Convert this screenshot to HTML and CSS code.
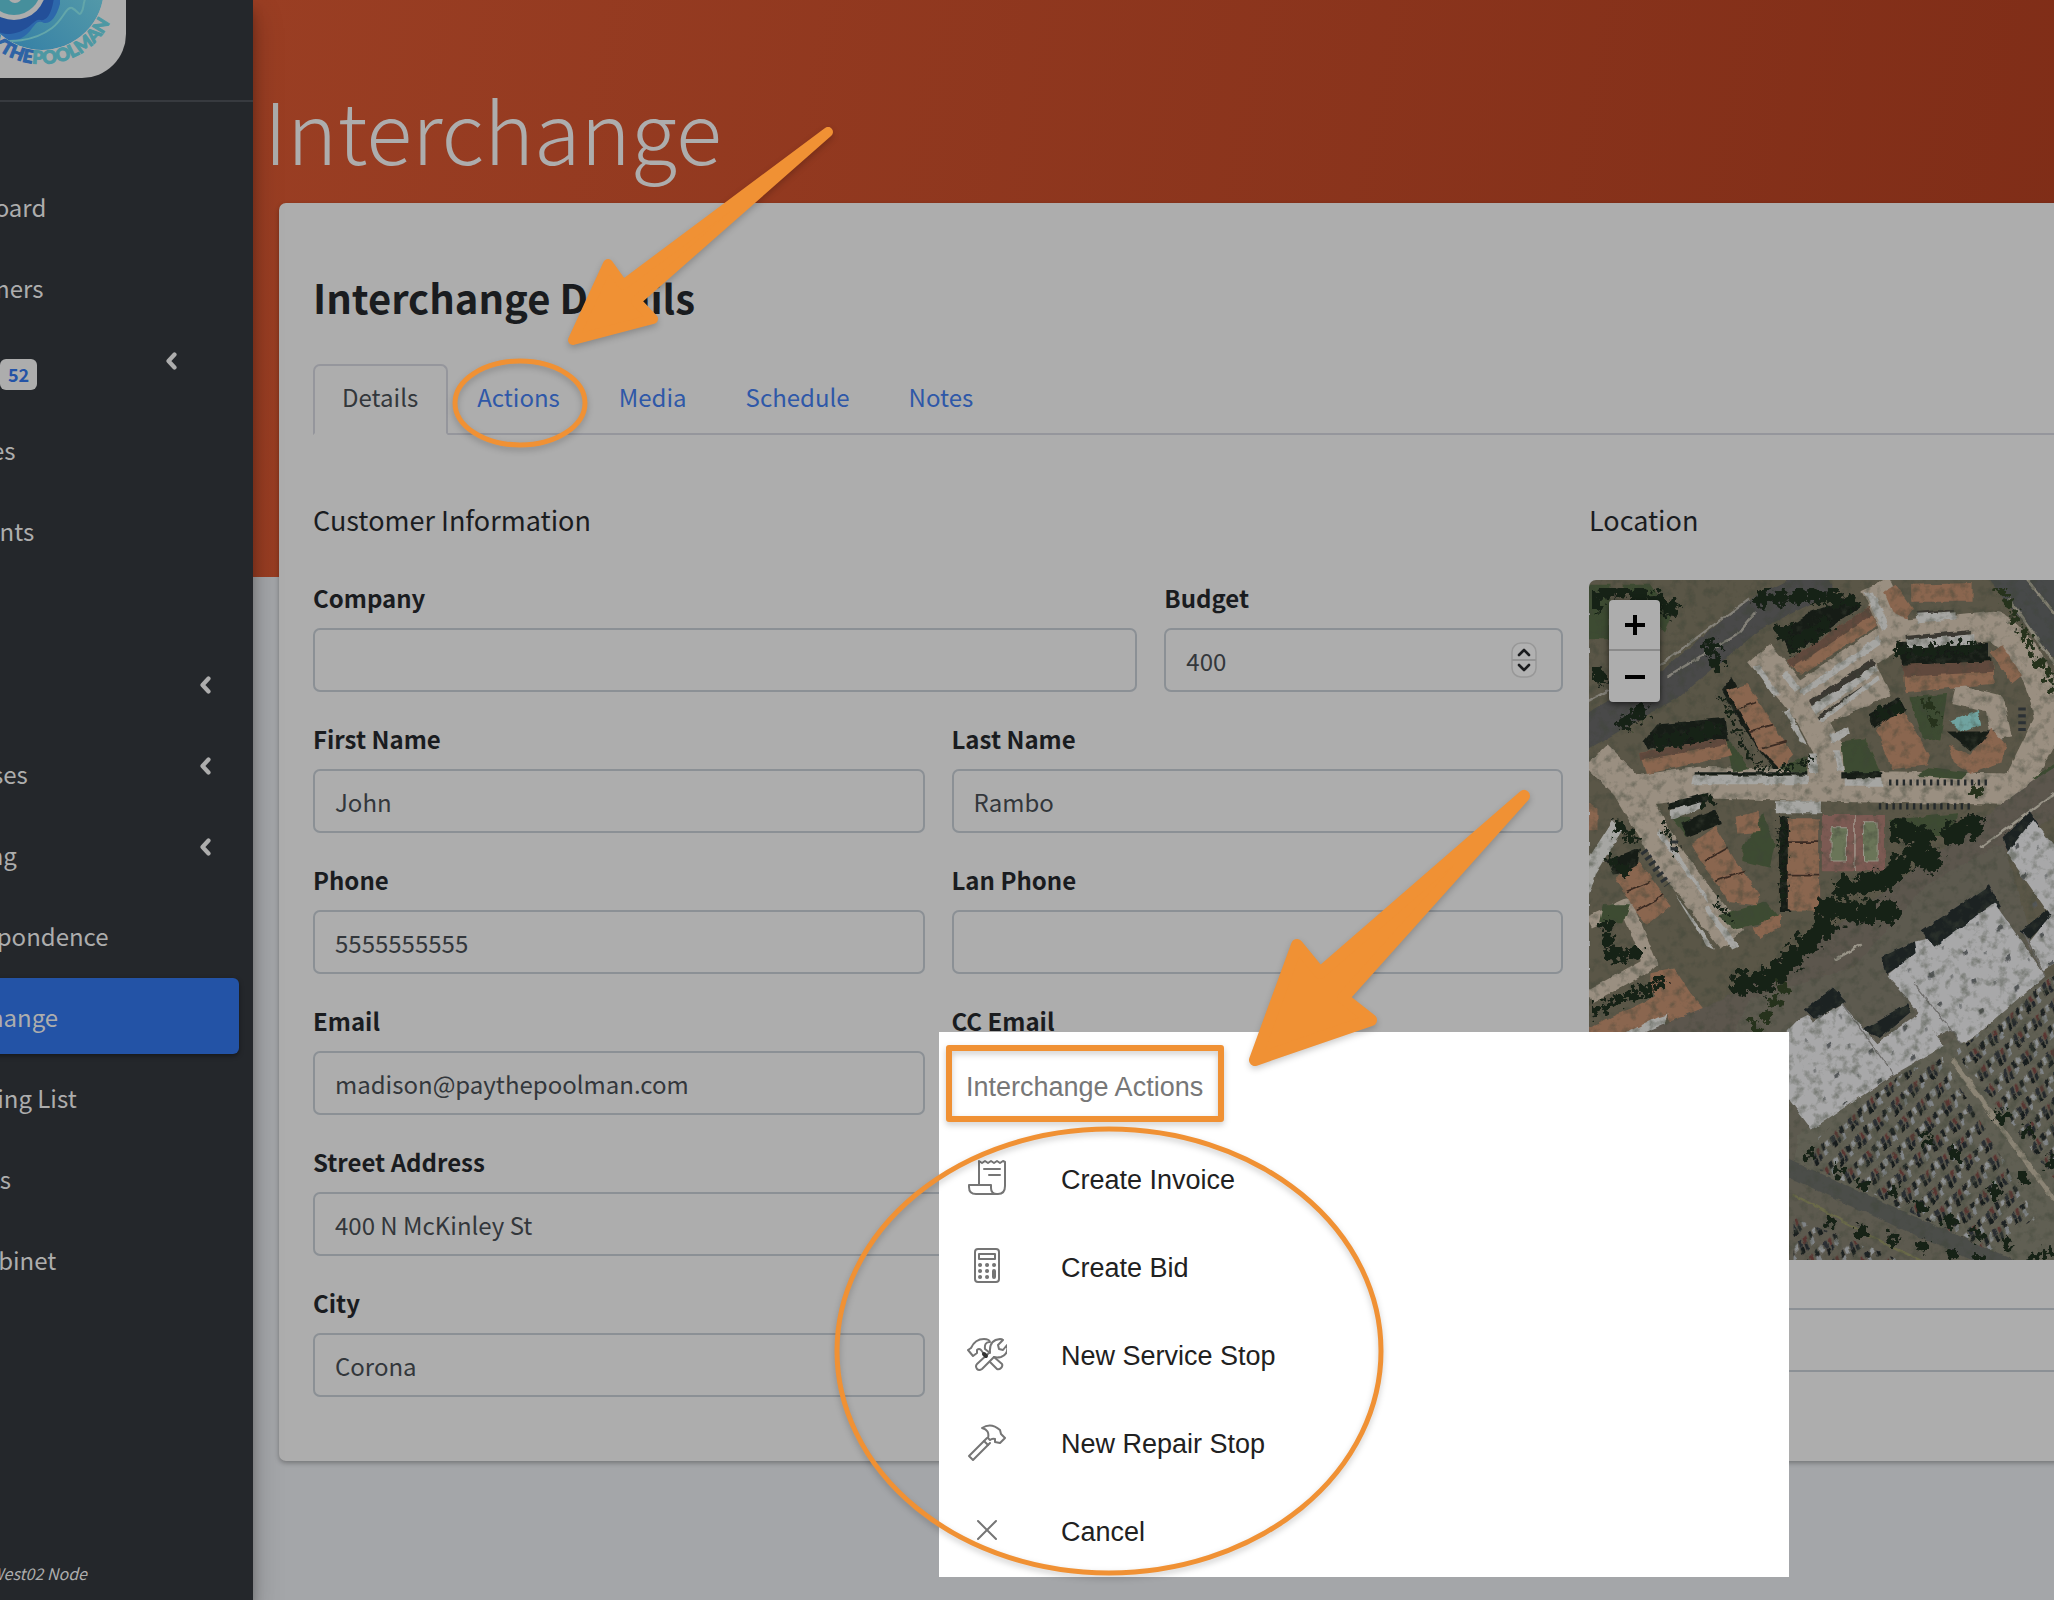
FILE: index.html
```
<!DOCTYPE html>
<html lang="en">
<head>
    <meta charset="UTF-8">
    <meta name="viewport" content="width=device-width, initial-scale=1.0">
    <title>Interchange</title>
    <link rel="stylesheet" href="styles.css">
</head>
<body>

    <!-- shared icons -->
    <svg class="sprite" aria-hidden="true">
        <symbol id="angle" viewBox="0 0 12 18">
            <path d="M9.500 2.500L3.500 9l6 6.500" fill="none" stroke="currentColor" stroke-width="4.200" stroke-linecap="round" stroke-linejoin="round"/>
        </symbol>
    </svg>

    <div class="app">
        <aside class="sidebar">
            <div class="brand">
                <svg class="logo" viewBox="-47 -78 173 156" role="img" aria-label="Pay The Poolman">
                    <defs>
                        <linearGradient id="wave" x1="0" y1="1" x2="1" y2="0">
                            <stop offset="0" stop-color="#2e7aa5"/>
                            <stop offset="1" stop-color="#63a6aa"/>
                        </linearGradient>
                        <clipPath id="disc"><circle cx="42" cy="-12" r="62"/></clipPath>
                        <path id="ring" d="M-34 -12a76 76 0 0 0 152 0"/>
                    </defs>
                    <rect x="-47" y="-78" width="173" height="156" rx="44" fill="#adadad"/>
                    <g clip-path="url(#disc)">
                        <circle cx="42" cy="-12" r="62" fill="url(#wave)"/>
                        <path d="M60 -70V4c-4 14-10 20-16 19c-6-3-8 0-14 8c-8 9-18 12-32 12l-20-50z" fill="#2d68ab"/>
                        <path d="M-20 -60H56C58 6 50 22 40 20c-6-2-10 12-30 14c-12 0-20-6-30-14z" fill="#234f99"/>
                        <path d="M-20 36C10 46 36 40 52 28c12-9 14-22 20-20c6 3 7 8 9 5c4-6 1-8 5-16" fill="none" stroke="#63a6aa" stroke-width="2"/>
                    </g>
                    <circle cx="14" cy="-12" r="32" fill="#adadad"/>
                    <circle cx="14" cy="-12" r="27" fill="#468f9c"/>
                    <circle cx="15" cy="-4" r="7" fill="#adadad"/>
                    <text class="logo-text logo-pay"><textPath href="#ring" startOffset="109">PAYTHE</textPath></text>
                    <text class="logo-text logo-pool"><textPath href="#ring" startOffset="109">POOLMAN</textPath></text>
                </svg>
            </div>

            <nav class="menu">
                <a href="#" class="menu-link">Dashboard</a>
                <a href="#" class="menu-link">Customers</a>
                <a href="#" class="menu-link menu-link-badge"><span class="badge">52</span><svg class="angle"><use href="#angle"/></svg></a>
                <a href="#" class="menu-link">Invoices</a>
                <a href="#" class="menu-link">Payments</a>
                <a href="#" class="menu-link" aria-label="Bids"></a>
                <a href="#" class="menu-link" aria-label="Items"><svg class="angle"><use href="#angle"/></svg></a>
                <a href="#" class="menu-link">Expenses<svg class="angle"><use href="#angle"/></svg></a>
                <a href="#" class="menu-link">Booking<svg class="angle"><use href="#angle"/></svg></a>
                <a href="#" class="menu-link">Correspondence</a>
                <a href="#" class="menu-link active">Interchange</a>
                <a href="#" class="menu-link">Shopping List</a>
                <a href="#" class="menu-link">Reports</a>
                <a href="#" class="menu-link">File Cabinet</a>
            </nav>

            <div class="node">West02 Node</div>
        </aside>

        <main class="main">
            <h1 class="page-title">Interchange</h1>

            <section class="card">
                <h2>Interchange Details</h2>

                <nav class="tabs">
                    <a href="#" class="tab active">Details</a>
                    <a href="#" class="tab">Actions</a>
                    <a href="#" class="tab">Media</a>
                    <a href="#" class="tab">Schedule</a>
                    <a href="#" class="tab">Notes</a>
                </nav>

                <div class="columns">
                    <form class="customer">
                        <h3>Customer Information</h3>
                        <div class="form-grid">
                            <div class="field span-8">
                                <label for="company">Company</label>
                                <input type="text" id="company">
                            </div>
                            <div class="field span-4">
                                <label for="budget">Budget</label>
                                <input type="number" id="budget" value="400">
                                <svg class="spinner" viewBox="0 0 26 36" aria-hidden="true">
                                    <rect x="1" y="1" width="24" height="34" rx="9" fill="#b1b1b1" stroke="#989898" stroke-width="1.500"/>
                                    <path d="M1 18h24" stroke="#949494" stroke-width="2"/>
                                    <path d="M8 13l5-5 5 5M8 23l5 5 5-5" fill="none" stroke="#1b1c1e" stroke-width="2.600" stroke-linecap="round" stroke-linejoin="round"/>
                                </svg>
                            </div>
                            <div class="field span-6">
                                <label for="first-name">First Name</label>
                                <input type="text" id="first-name" value="John">
                            </div>
                            <div class="field span-6">
                                <label for="last-name">Last Name</label>
                                <input type="text" id="last-name" value="Rambo">
                            </div>
                            <div class="field span-6">
                                <label for="phone">Phone</label>
                                <input type="text" id="phone" value="5555555555">
                            </div>
                            <div class="field span-6">
                                <label for="lan-phone">Lan Phone</label>
                                <input type="text" id="lan-phone">
                            </div>
                            <div class="field span-6">
                                <label for="email">Email</label>
                                <input type="text" id="email" value="madison@paythepoolman.com">
                            </div>
                            <div class="field span-6">
                                <label for="cc-email">CC Email</label>
                                <input type="text" id="cc-email">
                            </div>
                            <div class="field span-12">
                                <label for="street">Street Address</label>
                                <input type="text" id="street" value="400 N McKinley St">
                            </div>
                            <div class="field span-6">
                                <label for="city">City</label>
                                <input type="text" id="city" value="Corona">
                            </div>
                        </div>
                    </form>

                    <div class="location">
                        <h3>Location</h3>
                        <div class="map">
                            <svg class="aerial" viewBox="0 6 1833 2040" preserveAspectRatio="xMinYMin slice" aria-hidden="true">
                                <defs>
                                    <filter id="rough" x="0" y="0" width="1" height="1">
                                        <feTurbulence type="fractalNoise" baseFrequency="0.035" numOctaves="2" seed="4" result="n"/>
                                        <feDisplacementMap in="SourceGraphic" in2="n" scale="14" xChannelSelector="R" yChannelSelector="G"/>
                                    </filter>
                                    <filter id="leaves" x="0" y="0" width="1" height="1">
                                        <feTurbulence type="fractalNoise" baseFrequency="0.05" numOctaves="3" seed="9" result="n"/>
                                        <feDisplacementMap in="SourceGraphic" in2="n" scale="60" xChannelSelector="R" yChannelSelector="G"/>
                                        <feGaussianBlur stdDeviation="2"/>
                                    </filter>
                                    <filter id="grain" x="0" y="0" width="1" height="1">
                                        <feTurbulence type="fractalNoise" baseFrequency="0.035" numOctaves="4" seed="2"/>
                                        <feColorMatrix values="0 0 0 0 0.050  0 0 0 0 0.060  0 0 0 0 0.040  3 0 0 0 -1.450"/>
                                    </filter>
                                    <pattern id="cars" width="62" height="74" patternUnits="userSpaceOnUse" patternTransform="rotate(-32) scale(1 .55)">
                                        <rect x="4" y="4" width="11" height="24" fill="#1e2224"/>
                                        <rect x="19" y="6" width="11" height="22" fill="#8d9092"/>
                                        <rect x="34" y="4" width="11" height="24" fill="#2a2e33"/>
                                        <rect x="49" y="6" width="9" height="22" fill="#5a3430"/>
                                        <rect x="4" y="30" width="11" height="22" fill="#7f8386"/>
                                        <rect x="34" y="30" width="11" height="22" fill="#191d1e"/>
                                        <rect x="49" y="29" width="9" height="22" fill="#22272b"/>
                                    </pattern>
                                    <pattern id="vents" width="110" height="62" patternUnits="userSpaceOnUse" patternTransform="rotate(-24)">
                                        <rect x="12" y="10" width="14" height="9" fill="#55585a"/>
                                        <rect x="70" y="38" width="8" height="7" fill="#77797a"/>
                                    </pattern>
                                </defs>

                                <g filter="url(#rough)">
                                    <rect y="0" width="1833" height="2060" fill="#5a5647"/>

                                    <!-- streets -->
                                    <path d="M-40 470L240 310L480 110L700 0" fill="none" stroke="#494a48" stroke-width="92"/>
                                    <path d="M-20 370L230 240L470 60M230 290L440 160L490 100" fill="none" stroke="#85827a" stroke-width="7"/>
                                    <path d="M1170 0H1833V700L1395 270L1240 90z" fill="#474948"/>
                                    <path d="M1280 0L1395 140M1230 60L1395 290" fill="none" stroke="#8a8678" stroke-width="8"/>

                                    <!-- driveways -->
                                    <g fill="none" stroke="#9a8f81" stroke-linejoin="round">
                                        <path d="M20 520L110 610L240 830L420 1060" stroke-width="90"/>
                                        <path d="M100 630L320 600L700 610L1270 620" stroke-width="92"/>
                                        <path d="M500 220L640 390L700 500L710 640" stroke-width="86"/>
                                        <path d="M620 350L890 170L1190 140Q1330 240 1350 420L1250 620" stroke-width="88"/>
                                        <path d="M840 20L900 150" stroke-width="90"/>
                                        <path d="M0 1230L180 1130L110 960L0 1010" stroke-width="40"/>
                                        <path d="M1070 340L1190 370L1210 470" stroke-width="60"/>
                                        <path d="M660 380L860 290" stroke-width="120"/>
                                    </g>

                                    <!-- lawns -->
                                    <g fill="#3c4c30">
                                        <path d="M400 460L470 560L420 570zM560 560L640 520V580zM740 480L810 470L860 580H750zM940 350L1050 340L1030 480L980 470zM880 710L1080 690L1060 760H920zM450 790L510 690L545 780L530 850L450 830zM960 580L1000 555L1110 570L1090 590zM1300 590L1395 520V560L1330 590zM380 990L520 950L560 1000L420 1030zM0 20H60V180H0zM100 20L180 20L240 110L220 160z"/>
                                        <path d="M240 700L300 700L290 760zM40 960L120 960L100 1010L30 1010z"/>
                                    </g>

                                    <!-- building shadows -->
                                    <g fill="#161c18">
                                        <path d="M160 480L200 430L400 410L410 475L170 500zM390 330L440 420L540 560L560 560L420 290zM905 190H1170V240H915zM820 400L910 350L930 390L830 440zM1050 450L1190 450L1120 510zM560 700H590V980H560zM270 720L370 680L390 720L290 760zM50 830L150 790L140 860L70 870zM310 570H640V580H310zM740 570H860V588H740zM230 660L350 630V655L232 680z"/>
                                        <path d="M560 160L650 100L760 60L800 80L650 190L590 220zM920 230H1180V260H920z"/>
                                    </g>

                                    <!-- tiled roofs -->
                                    <g fill="#8a6650">
                                        <path d="M150 510L400 470L420 520L170 575zM405 330L465 310L540 430L600 520L560 560L500 500zM580 245L820 85L845 140L620 285zM920 255L1185 245L1190 310L925 335zM1175 215L1215 200L1270 285L1240 310zM945 20L1125 15V70H945zM865 40L900 20L950 90L930 120L890 100z"/>
                                        <path d="M840 440L920 385L1000 520L990 550L890 560zM1055 490L1120 520L1180 445L1225 490L1210 540L1120 575L1070 540zM583 705H675V975H583zM300 780L370 730L430 830L500 930L490 960L410 950L340 850zM75 880L150 835L240 960L170 1020L140 980zM430 700L495 685L500 745L435 750zM480 1025L560 985V1020L500 1060z"/>
                                        <path d="M180 1180L240 1150L350 1280L260 1240zM180 1160L250 1145L345 1290L260 1330L180 1210zM0 1320L200 1225L230 1290L0 1420zM0 660L25 680V740H0z"/>
                                    </g>
                                    <path d="M150 510L400 470L404 490L154 535zM580 245L820 85L830 110L600 262zM920 255L1185 245V275L922 290z" fill="#614a3d"/>
                                    <path d="M430 385L490 365M470 450L540 430M510 500L580 480M583 775H675M583 870H675M340 830L410 790M370 890L460 860M110 920L180 890M140 975L220 930" stroke="#3a2b22" stroke-width="5"/>

                                    <!-- carports -->
                                    <path d="M645 360L830 238L840 258L655 378zM670 405L800 318L804 326L676 415zM928 170L1120 153V166L930 184zM958 100L1070 90V98L960 107z" fill="#3a3731"/>
                                    <g fill="#a6a6a3">
                                        <path d="M480 260L500 255L560 345L540 345zM565 285L580 270L620 325L605 335zM570 390L585 385L640 490L620 480zM650 378L840 258L850 270L665 400zM675 415L845 285L850 300L685 422zM620 330L850 170L855 195L630 345zM808 45L835 40L880 140L860 155zM960 105L1075 98V122L965 130zM930 182L1130 165V195L935 208z"/>
                                        <path d="M705 460L760 435L765 455L710 485zM305 580H645V605H300zM750 588H860V612H750zM240 680L330 655L335 675L240 708zM548 655H680V690H548zM645 515H668V572H645zM715 505H735L748 565H728zM210 740L345 930L350 955L200 750zM250 925L370 1090L345 1080zM350 960L440 1080L420 1090L340 970zM0 820L70 710L100 740L20 870L0 930z"/>
                                        <path d="M0 1390L200 1290L230 1280L220 1310L0 1430zM210 1350L290 1300V1330L220 1370z"/>
                                    </g>

                                    <!-- tennis courts and pool -->
                                    <path d="M683 695H868V860H683z" fill="#7c5a52"/>
                                    <path d="M710 730H755V830H710zM805 715H845V830H805z" fill="#6a7558" stroke="#99978a" stroke-width="3"/>
                                    <path d="M780 695V860" stroke="#a39b90" stroke-width="4"/>
                                    <path d="M1060 420L1140 390L1150 430L1090 450z" fill="#6fa3a0"/>

                                    <!-- avenue -->
                                    <path d="M1833 340L1343 640L1073 840L803 1040L573 1210L373 1310L60 1440" fill="none" stroke="#5b564e" stroke-width="120"/>
                                    <path d="M1395 610L1150 790M1130 830L1040 900M800 1075L720 1120M610 1205L560 1240" fill="none" stroke="#9a9589" stroke-width="7"/>
                                </g>

                                <!-- shopping centre -->
                                <g filter="url(#rough)">
                                    <g transform="matrix(1 0 0 1.530 -27 -234)">
                                        <path d="M440 1043L500 960L800 900L1020 740L1240 660L1422 1043V1500H440z" fill="#5d5a50"/>
                                        <path d="M1422 900L930 1105L640 1220L627 1290L1422 1500H1900V880z" fill="#605e52"/>
                                        <path d="M1422 900L1100 1060L1422 1330z" fill="url(#cars)"/>
                                        <path d="M930 1110L1060 1070L1340 1380L1200 1440L680 1280L700 1225z" fill="url(#cars)"/>
                                        <path d="M1090 1075L1390 1345" stroke="#8b8474" stroke-width="12"/>
                                        <path d="M600 1280L1000 1400L1422 1520" fill="none" stroke="#4c4e4a" stroke-width="34"/>
                                        <path d="M627 1335L900 1430L1060 1480" fill="none" stroke="#6b6a4a" stroke-width="5"/>
                                        <path d="M627 1380L940 1460L960 1490H627z" fill="url(#cars)"/>
                                        <path d="M1240 650L1320 600L1350 630L1260 685zM1000 830L1200 742L1235 785L1040 860zM885 880L980 850L1000 870L900 912zM660 980L740 938L780 965L690 1000zM1290 830L1370 790L1390 800L1320 845zM830 1020L960 970L970 985L880 1035z" fill="#1a2123"/>
                                        <g fill="#a8a8a9">
                                            <path d="M1252 680L1330 615L1422 695L1900 900V860L1422 880L1360 905L1320 850L1380 800z"/>
                                            <path d="M900 915L985 870L980 850L1020 845L1040 860L1215 775L1365 915L1160 1030L1120 1045L1090 1020L1050 1030z"/>
                                            <path d="M640 1000L670 990L680 1005L770 970L870 1045L1000 985L1070 1050L920 1105L680 1210L610 1150V1020z"/>
                                        </g>
                                        <path d="M1252 680L1330 615L1422 695V880L1360 905L1320 850zM920 915L1215 775L1350 915L1160 1020zM650 1010L770 970L870 1045L1000 985L1060 1050L680 1200z" fill="url(#vents)"/>
                                        <path d="M770 970L920 1105M980 930L1120 1045M1300 830L1365 915" stroke="#6f6e6c" stroke-width="3"/>
                                    </g>
                                </g>

                                <!-- ground texture -->
                                <rect width="1833" height="2060" filter="url(#grain)" opacity=".45"/>

                                <!-- trees -->
                                <g filter="url(#leaves)" fill="none" stroke="#182018" stroke-linecap="round">
                                    <path d="M10 70L70 30L210 70L280 120M30 290L70 300M510 60L650 50L770 70M570 160L610 200L710 120M150 390L70 450M210 480L400 440M360 200L380 270" stroke-width="50" stroke-dasharray="1 50"/>
                                    <path d="M750 910L860 890L970 800L1010 840M700 970L770 980L890 980M920 740L990 770M1070 750L1170 710M450 1190L530 1180L610 1100L710 1010" stroke-width="70" stroke-dasharray="1 58"/>
                                    <path d="M860 400L910 380M915 215L1000 215L1090 205L1170 200M350 650L370 670M90 730L130 770M70 830L120 870M10 1270L210 1190M50 1020L70 1120L160 1090" stroke-width="38" stroke-dasharray="1 42"/>
                                    <path d="M1210 30L1250 120L1320 240L1405 380M990 370L1020 440M1140 630L1180 610M570 1200L510 1300L450 1330" stroke="#27321f" stroke-width="34" stroke-dasharray="1 48"/>
                                    <path d="M650 1690L770 1770L910 1810L1110 1910L1310 1990M990 1650L1110 1710M710 1890L1010 1970L1250 2030M1210 1580L1310 1630M1350 1980L1405 1860M1190 1800L1405 1690" stroke-width="34" stroke-dasharray="1 90"/>
                                    <path d="M390 350L450 490L510 570M570 730V970M550 570L660 530M410 990L370 950M260 800L210 710" stroke-width="18" stroke-dasharray="1 26"/>
                                </g>

                                <path d="M880 600H1180M850 670H1130" stroke="#24292b" stroke-width="18" stroke-dasharray="7 13"/>
                                <path d="M160 800L230 900M250 770V810M1270 380V460" stroke="#2c3134" stroke-width="22" stroke-dasharray="9 11"/>
                            </svg>
                            <div class="zoom-control">
                                <button type="button" aria-label="Zoom in"><svg viewBox="0 0 22 22"><path d="M11 1v20M1 11h20"/></svg></button>
                                <button type="button" aria-label="Zoom out"><svg viewBox="0 0 22 22"><path d="M1 11h20"/></svg></button>
                            </div>
                        </div>
                        <input type="text" class="map-search" aria-label="Coordinates">
                    </div>
                </div>
            </section>
        </main>
    </div>

    <div class="sheet">
        <div class="sheet-title">Interchange Actions</div>
        <button type="button" class="sheet-item">
            <svg viewBox="0 0 40 40">
                <path d="M12 26V3l3 2 3-2 3 2 3-2 3 2 3-2 3 2 3-2 2 1v24q0 8-7 8H9q-7 0-7-7v-2h22v3q0 6 6 6"/>
                <path d="M17 11h16M22 17h11"/>
            </svg>
            Create Invoice
        </button>
        <button type="button" class="sheet-item">
            <svg viewBox="0 0 40 40">
                <rect x="8" y="3" width="24" height="33" rx="3"/>
                <rect x="12" y="8" width="16" height="5"/>
                <path d="M13 19h.1M20 19h.1M27 19h.1M13 25h.1M20 25h.1M13 31h.1M20 31h.1M27 25v6" stroke-width="4"/>
            </svg>
            Create Bid
        </button>
        <button type="button" class="sheet-item">
            <svg viewBox="0 0 40 40">
                <path d="M17 20l-3-4q-2-2-4 0v3l-4 3-5-6 3-2q4-9 13-9 5 0 6 3-6 0-5 7l5 4"/>
                <path d="M23 18q-1-12 10-13 2 0 3 1l-5 5 1 4 4 1 4-5q2 9-6 12-4 1-7 0L15 35q-3 2-5 0-2-3 0-5z"/>
                <path d="M23 28l7 7q2 1 4-1t1-4l-8-7"/>
                <path d="M17 20l2 2" stroke="#333" stroke-width="4"/>
            </svg>
            New Service Stop
        </button>
        <button type="button" class="sheet-item">
            <svg viewBox="0 0 40 40">
                <path d="M15 6q9-6 18 2l1 4 4 4-5 5-5-1v-3q-3-1-5 1l-2-2q2-8-6-10z"/>
                <path d="M20 16L2 34l4 4 17-17"/>
                <path d="M17 19l4 4"/>
            </svg>
            New Repair Stop
        </button>
        <button type="button" class="sheet-item">
            <svg viewBox="0 0 40 40"><path d="M11 11l18 18M29 11L11 29"/></svg>
            Cancel
        </button>
    </div>

    <!-- walkthrough markers -->
    <svg class="markers" width="1600" height="1600" aria-hidden="true">
        <g fill="none" stroke="#f09134">
            <ellipse cx="520" cy="403" rx="65" ry="42" stroke-width="5"/>
            <ellipse cx="1109" cy="1351" rx="272" ry="222" stroke-width="5"/>
            <rect x="949" y="1048" width="272" height="71" stroke-width="6" stroke-linejoin="round"/>
        </g>
        <g fill="#f09134" stroke="#f09134" stroke-width="10" stroke-linejoin="round">
            <path d="M828 132L623 285L608 264L573 340L653 319L636 301z"/>
            <path d="M1524 796L1320 973L1297 945L1255 1060L1371 1020L1343 998z" stroke-width="12"/>
        </g>
    </svg>

</body>
</html>
```
FILE: styles.css
```
* {
    box-sizing: border-box;
}

body {
    margin: 0;
    position: relative;
    overflow: hidden;
    min-height: 100vh;
    background-color: #a4a6a9;
    color: #1a1c1f;
    font-family: "Noto Sans CJK SC", "Open Sans", sans-serif;
    font-size: 24px;
    line-height: 36px;
}

h1, h2, h3 {
    margin: 0;
}

a {
    text-decoration: none;
}

.sprite {
    position: absolute;
    width: 0;
    height: 0;
}

.app {
    display: flex;
    min-height: 100vh;
}

/* sidebar */
.sidebar {
    display: flex;
    flex-direction: column;
    flex: none;
    width: 500px;
    margin-left: -247px;
    padding-bottom: 11px;
    background-color: #24272b;
    color: #adadad;
    box-shadow: 0 14px 28px rgba(0, 0, 0, 0.25), 0 10px 10px rgba(0, 0, 0, 0.22);
    z-index: 1;
}

.brand {
    height: 102px;
    padding-left: 200px;
    border-bottom: 2px solid #373a3f;
    overflow: hidden;
}

.logo {
    display: block;
    width: 173px;
    height: 156px;
    margin-top: -78px;
}

.logo-text {
    font: 900 18px Lato, sans-serif;
    stroke-width: 1;
}

.logo-pay {
    fill: #2d63a5;
    stroke: #2d63a5;
    text-anchor: end;
}

.logo-pool {
    fill: #4d98a3;
    stroke: #4d98a3;
}

.menu {
    display: flex;
    flex-direction: column;
    gap: 5px;
    margin: 66px 14px 0;
}

.menu-link {
    display: flex;
    align-items: center;
    height: 76px;
    padding: 2px 28px 0 157px;
    border-radius: 6px;
    color: #adadad;
}

.menu-link.active {
    background-color: #2353a6;
    box-shadow: 0 2px 5px rgba(0, 0, 0, 0.4);
}

.menu-link-badge {
    padding-left: 233px;
    padding-right: 62px;
}

.angle {
    align-self: flex-start;
    width: 12px;
    height: 18px;
    margin-top: 20px;
    margin-left: auto;
}

.badge {
    margin-top: 10px;
    padding: 0 8px;
    border-radius: 6px;
    background-color: #adadad;
    color: #2353a6;
    font-size: 18px;
    font-weight: 700;
    line-height: 31px;
}

.node {
    margin-top: auto;
    padding-right: 166px;
    text-align: right;
    font-size: 16px;
    font-style: italic;
    line-height: 32px;
}

/* page */
.main {
    flex: 1;
    min-width: 0;
    margin-right: -220px;
    padding: 78px 26px 0;
    background: linear-gradient(100deg, #9a3e23, #7c2b16) no-repeat;
    background-size: 100% 577px;
}

.page-title {
    margin-left: -15px;
    color: #adadad;
    font-size: 85px;
    font-weight: 300;
    line-height: 100px;
}

.card {
    margin-top: 25px;
    padding: 70px 34px 64px;
    border-radius: 7px;
    background-color: #adadad;
    box-shadow: 0 2px 5px rgba(0, 0, 0, 0.3);
}

.card h2 {
    font-size: 40px;
    font-weight: 700;
    line-height: 48px;
}

.card h3 {
    margin-bottom: 40px;
    font-size: 27px;
    font-weight: 400;
    line-height: 40px;
}

.tabs {
    display: flex;
    margin-top: 43px;
    border-bottom: 2px solid #95969c;
}

.tab {
    margin-bottom: -2px;
    padding: 13px 28px 18px 27px;
    border: 2px solid transparent;
    color: #2f58a8;
}

.tab.active {
    border-color: #95969c #95969c #adadad;
    border-radius: 7px 7px 0 0;
    background-color: #adadad;
    color: #33373b;
}

.columns {
    display: grid;
    grid-template-columns: minmax(0, 2fr) minmax(0, 1fr);
    gap: 26px;
    margin-top: 65px;
}

.form-grid {
    display: grid;
    grid-template-columns: repeat(12, minmax(0, 1fr));
    gap: 29px 27px;
}

.span-4 {
    grid-column: span 4;
}

.span-6 {
    grid-column: span 6;
}

.span-8 {
    grid-column: span 8;
}

.span-12 {
    grid-column: span 12;
}

.field {
    position: relative;
}

.field label {
    display: block;
    margin-bottom: 12px;
    font-weight: 700;
}

input {
    display: block;
    width: 100%;
    height: 64px;
    padding: 0 20px;
    border: 2px solid #8b9095;
    border-radius: 7px;
    background-color: transparent;
    color: #33373b;
    font: inherit;
}

input[type="number"] {
    appearance: textfield;
    -moz-appearance: textfield;
}

input::-webkit-inner-spin-button {
    -webkit-appearance: none;
}

.spinner {
    position: absolute;
    right: 26px;
    bottom: 14px;
    width: 26px;
    height: 36px;
}

/* map */
.map {
    position: relative;
    height: 680px;
    margin-bottom: 48px;
    border-radius: 7px;
    overflow: hidden;
}

.aerial {
    display: block;
    width: 100%;
    height: 100%;
}

.zoom-control {
    position: absolute;
    top: 20px;
    left: 20px;
    display: flex;
    flex-direction: column;
    width: 51px;
    border-radius: 4px;
    background-color: #adadad;
    box-shadow: 0 2px 6px rgba(0, 0, 0, 0.6);
}

.zoom-control button {
    display: flex;
    align-items: center;
    justify-content: center;
    height: 51px;
    padding: 0;
    border: none;
    background: none;
}

.zoom-control button:first-child {
    border-bottom: 2px solid #8a8a8a;
}

.zoom-control svg {
    width: 22px;
    height: 22px;
    stroke: #000;
    stroke-width: 4;
}

/* action sheet */
.sheet {
    position: absolute;
    right: 265px;
    bottom: 23px;
    width: 850px;
    height: 545px;
    padding-top: 10px;
    background-color: #fff;
    font-family: "Liberation Sans", Arial, sans-serif;
    font-size: 27px;
}

.sheet-title {
    margin-bottom: 4px;
    padding: 0 27px;
    color: #777;
    line-height: 90px;
}

.sheet-item {
    display: flex;
    align-items: center;
    gap: 54px;
    width: 100%;
    height: 88px;
    padding: 0 28px;
    border: none;
    background: none;
    color: #212121;
    font: inherit;
    text-align: left;
}

.sheet-item svg {
    width: 40px;
    height: 40px;
    margin-bottom: 4px;
    fill: none;
    stroke: #757575;
    stroke-width: 2;
    stroke-linecap: round;
    stroke-linejoin: round;
}

.markers {
    position: absolute;
    top: 0;
    left: 0;
    filter: drop-shadow(0 3px 3px rgba(0, 0, 0, 0.2));
    pointer-events: none;
}
```
